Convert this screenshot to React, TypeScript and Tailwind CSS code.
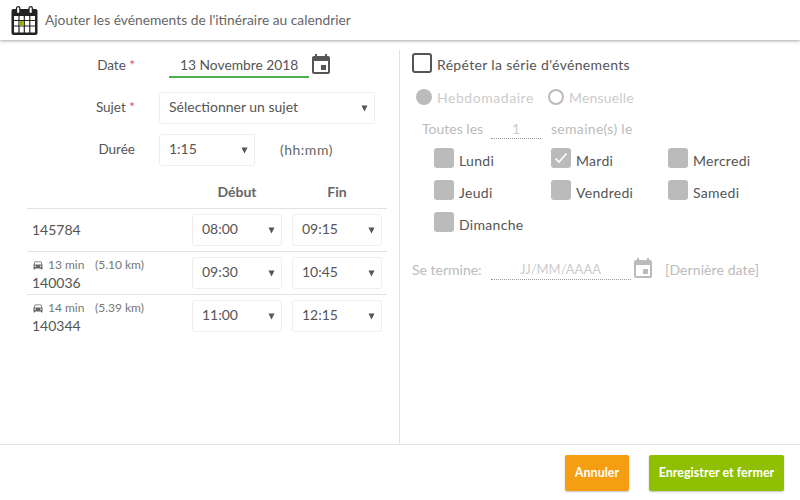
const font = { fontFamily: 'Lato, "Noto Sans", sans-serif' };

function Arrow() {
  return (
    <svg width="7" height="7" viewBox="0 0 7 7" className="absolute right-[6px] top-[12px]">
      <path d="M0.5 0.5h6L3.500 6.500z" fill="#555" />
    </svg>
  );
}

function Select({ value, className }: { value: string; className: string }) {
  return (
    <div className={`relative h-8 rounded-[3px] border border-[#eeeeee] bg-white pl-[9px] text-[14px] leading-[28px] text-[#555] ${className}`}>
      {value}
      <Arrow />
    </div>
  );
}

function EventIcon({ color }: { color: string }) {
  return (
    <svg width="24" height="24" viewBox="0 0 24 24" fill={color}>
      <path d="M17 12h-5v5h5v-5zM16 1v2H8V1H6v2H5c-1.11 0-1.99.9-1.99 2L3 19c0 1.1.89 2 2 2h14c1.1 0 2-.9 2-2V5c0-1.1-.9-2-2-2h-1V1h-2zm3 18H5V8h14v11z" />
    </svg>
  );
}

function HeaderIcon() {
  return (
    <svg width="27" height="29" viewBox="0 0 27 29" className="shrink-0">
      <rect x="0.5" y="3" width="26" height="26" rx="2" fill="#222" />
      <rect x="3" y="10" width="21" height="16.5" fill="#fff" />
      <path d="M8 10v17M13.3 10v17M18.8 10v17M3 14.5h21M3 20h21" stroke="#222" strokeWidth="1.2" />
      <rect x="8.6" y="15" width="4.2" height="4.6" fill="#8fb800" />
      <rect x="5.5" y="0.7" width="3.4" height="7" rx="1.7" fill="#fff" stroke="#222" strokeWidth="1.3" />
      <rect x="18" y="0.7" width="3.4" height="7" rx="1.7" fill="#fff" stroke="#222" strokeWidth="1.3" />
    </svg>
  );
}

function CarIcon() {
  return (
    <svg width="12" height="12" viewBox="0 0 24 24" fill="#666" className="shrink-0">
      <path d="M18.9 6c-.2-.6-.8-1-1.400-1h-11c-.7 0-1.200.4-1.400 1L3 12v8c0 .6.400 1 1 1h1c.6 0 1-.4 1-1v-1h12v1c0 .6.400 1 1 1h1c.6 0 1-.4 1-1v-8l-2.100-6zM6.500 16a1.500 1.500 0 1 1 0-3 1.500 1.500 0 0 1 0 3zm11 0a1.500 1.500 0 1 1 0-3 1.500 1.500 0 0 1 0 3zM5 11l1.500-4.500h11L19 11H5z" />
    </svg>
  );
}

function Row({ id, travel, start, end }: { id: string; travel?: [string, string]; start: string; end: string }) {
  return (
    <div className="flex h-[43px] items-center border-t border-[#e2e2e2]">
      <div className={`w-[165px] pl-[5px] text-[14px] text-[#555] ${travel ? "pt-[2px]" : "pb-[2px]"}`}>
        {travel && (
          <div className="flex h-[17px] items-center text-[12px] text-[#777]">
            <CarIcon />
            <span className="ml-[4px] w-[47px]">{travel[0]}</span>
            <span>{travel[1]}</span>
          </div>
        )}
        <div className={travel ? "leading-[18px]" : ""}>{id}</div>
      </div>
      <Select value={start} className="w-[90px]" />
      <Select value={end} className="ml-[10px] w-[90px]" />
    </div>
  );
}

function Day({ label, checked }: { label: string; checked?: boolean }) {
  return (
    <div className="flex h-8 w-[117px] items-start">
      <div className="flex h-5 w-5 items-center justify-center rounded-[3px] bg-[#bbbbbb]">
        {checked && (
          <svg width="16" height="16" viewBox="0 0 16 16" fill="none">
            <path d="M2.500 8.500l3.500 3.500 7.500-8.500" stroke="#fff" strokeWidth="1.600" />
          </svg>
        )}
      </div>
      <span className="ml-[5px] mt-[4px] text-[14px] leading-[18px] tracking-[0.3px] text-[#555]">{label}</span>
    </div>
  );
}

export default function App() {
  return (
    <div className="flex h-[500px] w-[800px] flex-col overflow-hidden bg-white" style={font}>
      <header className="relative z-10 flex h-10 shrink-0 items-center bg-white pl-[11px] shadow-[0_1px_3px_rgba(0,0,0,0.35)]">
        <HeaderIcon />
        <h1 className="ml-[7px] text-[13.800px] font-normal text-[#666]">Ajouter les événements de l'itinéraire au calendrier</h1>
      </header>

      <main className="flex min-h-0 flex-1">
        <section className="mt-[10px] w-[400px] shrink-0 border-r border-[#e2e2e2] pl-[27px] pr-[12px]">
          <div className="flex h-[30px] items-center">
            <div className="w-[108px] pt-[1px] text-right text-[13.500px] text-[#555]">
              Date <span className="text-[#e54b4b]">*</span>
            </div>
            <div className="ml-[34px] h-[26px] w-[140px] border-b-2 border-[#4caf50] pl-[11px] text-[13.800px] leading-[26px] text-[#555]">13 Novembre 2018</div>
            <EventIcon color="#555" />
          </div>
          <div className="mt-[12px] flex items-center">
            <div className="w-[108px] pb-[2px] text-right text-[13.500px] text-[#555]">
              Sujet <span className="text-[#e54b4b]">*</span>
            </div>
            <Select value="Sélectionner un sujet" className="ml-[24px] w-[216px]" />
          </div>
          <div className="mt-[10px] flex items-center">
            <div className="w-[108px] pb-[2px] text-right text-[13.500px] text-[#555]">Durée</div>
            <Select value="1:15" className="ml-[24px] w-[96px]" />
            <span className="ml-[25px] pb-[2px] text-[14px] tracking-[0.5px] text-[#666]">(hh:mm)</span>
          </div>

          <div className="mt-[12px] flex h-[30px] items-center pb-[3px] text-[14px] font-bold text-[#666]">
            <div className="ml-[165px] w-[90px] text-center">Début</div>
            <div className="ml-[10px] w-[90px] text-center">Fin</div>
          </div>
          <Row id="145784" start="08:00" end="09:15" />
          <Row id="140036" travel={["13 min", "(5.10 km)"]} start="09:30" end="10:45" />
          <Row id="140344" travel={["14 min", "(5.39 km)"]} start="11:00" end="12:15" />
        </section>

        <section className="min-w-0 flex-1 pl-[12px] pt-[13px]">
          <div className="flex h-5 items-center">
            <div className="h-5 w-5 rounded-[3px] border-2 border-[#555]" />
            <span className="ml-[5px] pt-[3px] text-[14px] tracking-[0.33px] text-[#555]">Répéter la série d'événements</span>
          </div>

          <div className="mt-[15px] flex h-[18px] items-center pl-[4px] text-[14px] text-[#cccccc]">
            <div className="h-4 w-4 rounded-full bg-[#bbbbbb]" />
            <span className="ml-[5px] tracking-[0.55px]">Hebdomadaire</span>
            <div className="ml-[14px] h-4 w-4 rounded-full border-2 border-[#bbbbbb]" />
            <span className="ml-[5px] tracking-[0.2px]">Mensuelle</span>
          </div>

          <div className="mt-[12px] flex h-[20px] items-center text-[14px] text-[#bbbbbb]">
            <span className="ml-[10px] w-[69px]">Toutes les</span>
            <div className="mt-[1px] h-[21px] w-[50px] border-b border-dotted border-[#999] text-center leading-[22px] text-[#cccccc]">1</div>
            <span className="ml-[10px] tracking-[0.3px]">semaine(s) le</span>
          </div>

          <div className="mt-[10px] pl-[22px]">
            <div className="flex">
              <Day label="Lundi" />
              <Day label="Mardi" checked />
              <Day label="Mercredi" />
            </div>
            <div className="flex">
              <Day label="Jeudi" />
              <Day label="Vendredi" />
              <Day label="Samedi" />
            </div>
            <div className="flex">
              <Day label="Dimanche" />
            </div>
          </div>

          <div className="mt-[13px] flex h-6 items-center text-[14px] text-[#bbbbbb]">
            <span className="w-[79px]">Se termine:</span>
            <div className="h-[21px] w-[140px] border-b border-dotted border-[#999] pl-[29px] text-[13px] leading-[20px] text-[#cccccc]">JJ/MM/AAAA</div>
            <EventIcon color="#bbbbbb" />
            <span className="ml-[10px] tracking-[0.1px]">[Dernière date]</span>
          </div>
        </section>
      </main>

      <footer className="flex h-[56px] shrink-0 items-start justify-end border-t border-[#e2e2e2] pr-[16px] pt-[10px]">
        <button className="h-9 w-16 rounded-[2px] bg-[#f59e12] text-[12.500px] font-bold text-white shadow-[0_1px_2px_rgba(0,0,0,0.25)]">Annuler</button>
        <button className="ml-5 h-9 w-[135px] rounded-[2px] bg-[#8fbf00] text-[12.500px] font-bold text-white shadow-[0_1px_2px_rgba(0,0,0,0.25)]">Enregistrer et fermer</button>
      </footer>
    </div>
  );
}
